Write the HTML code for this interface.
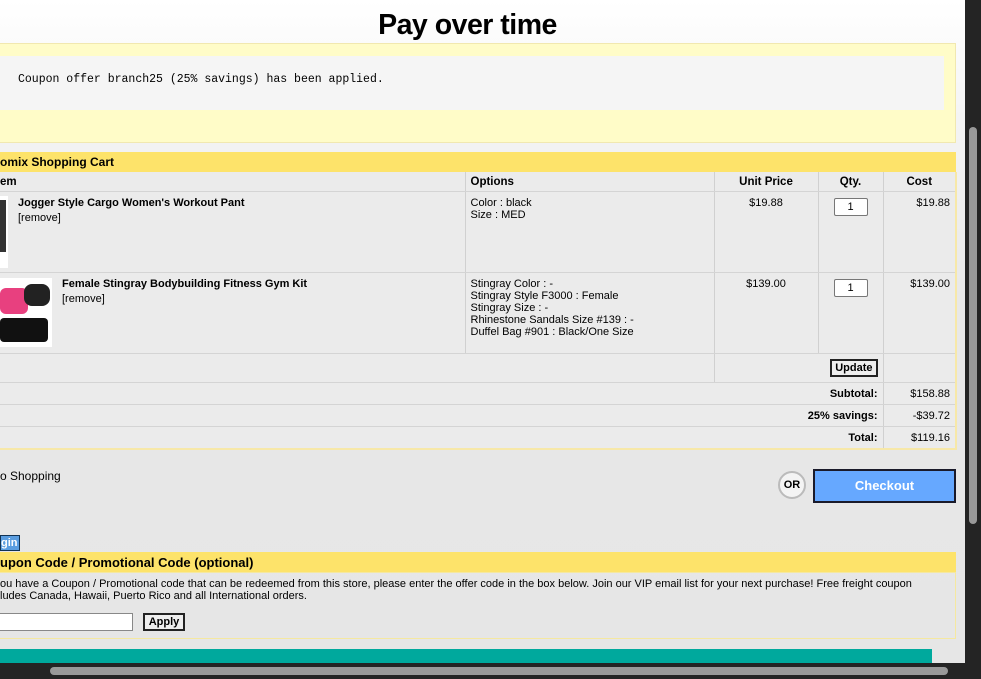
<!DOCTYPE html>
<html><head><style>
*{margin:0;padding:0;box-sizing:border-box}
body{width:981px;height:679px;overflow:hidden;position:relative;background:linear-gradient(#fff 0,#f4f4f4 120px,#e8e8e8 300px,#e6e6e6);font-family:"Liberation Sans",Arial,sans-serif;font-size:11px;color:#000}
.a{position:absolute}
h1{position:absolute;left:0;width:935px;top:9px;text-align:center;font-size:28.5px;font-weight:bold;letter-spacing:-0.5px}
.b{font-weight:bold}
td{border-right:1px solid #d0d0d0;border-bottom:1px solid #d4d4d4;vertical-align:top;padding:5px 5px 4px}
table{border-collapse:collapse;position:absolute;left:0;top:172px;width:956px;table-layout:fixed;background:#ebebeb;border-right:2px solid #f7e8a8;border-bottom:2px solid #f7e8a8}
</style></head><body>
<h1>Pay over time</h1>
<div class="a" style="left:0;top:43px;width:956px;height:100px;background:#fffcc8;border:1px solid #f1e8b0;border-left:none"></div>
<div class="a" style="left:0;top:56px;width:944px;height:54px;background:#f5f5f5"></div>
<div class="a" style="left:18px;top:73px;font-family:'Liberation Mono',monospace;font-size:11.5px">Coupon offer branch25 (25% savings) has been applied.</div>
<div class="a b" style="left:0;top:152px;width:956px;height:20px;background:#fde36a;padding:3px 0 0 0;font-size:12px">omix Shopping Cart</div>
<table>
<colgroup><col style="width:465px"><col style="width:249px"><col style="width:104px"><col style="width:65px"><col style="width:73px"></colgroup>
<tr style="height:19px" class="b"><td style="padding:4px 0 2px;font-size:11.5px">em</td><td style="font-size:11.5px;padding:4px 5px 2px">Options</td><td style="text-align:center;font-size:11.5px;padding:4px 3px 2px">Unit Price</td><td style="text-align:center;font-size:11.5px;padding:4px 3px 2px">Qty.</td><td style="text-align:center;font-size:11.5px;padding:4px 3px 2px">Cost</td></tr>
<tr style="height:81px"><td style="position:relative;padding:5px 0 0 18px"><div class="a" style="left:0;top:4px;width:8px;height:72px;background:#fff"><div style="width:6px;height:52px;background:#333;margin-top:4px"></div></div><div class="b">Jogger Style Cargo Women's Workout Pant</div><div style="margin-top:3px">[remove]</div></td><td style="line-height:12px">Color : black<br>Size : MED</td><td style="text-align:center">$19.88</td><td style="text-align:center;padding-top:6px"><div style="width:34px;height:18px;margin:0 auto;background:#fff;border:1px solid #777;border-radius:2px;font-size:11px;padding:2px 0">1</div></td><td style="text-align:right">$19.88</td></tr>
<tr style="height:81px"><td style="position:relative;padding:5px 0 0 62px"><div class="a" style="left:0;top:5px;width:52px;height:69px;background:#fff"><div class="a" style="left:0;top:10px;width:28px;height:26px;background:#e8407f;border-radius:6px"></div><div class="a" style="left:24px;top:6px;width:26px;height:22px;background:#222;border-radius:8px"></div><div class="a" style="left:0;top:40px;width:48px;height:24px;background:#111;border-radius:4px"></div></div><div class="b">Female Stingray Bodybuilding Fitness Gym Kit</div><div style="margin-top:3px">[remove]</div></td><td style="line-height:12px">Stingray Color : -<br>Stingray Style F3000 : Female<br>Stingray Size : -<br>Rhinestone Sandals Size #139 : -<br>Duffel Bag #901 : Black/One Size</td><td style="text-align:center">$139.00</td><td style="text-align:center;padding-top:6px"><div style="width:34px;height:18px;margin:0 auto;background:#fff;border:1px solid #777;border-radius:2px;font-size:11px;padding:2px 0">1</div></td><td style="text-align:right">$139.00</td></tr>
<tr style="height:29px"><td colspan="2"></td><td colspan="2" style="text-align:right;padding:5px 5px"><span class="b" style="display:inline-block;border:2px solid #222;background:#eee;padding:1px 3px;font-size:11px">Update</span></td><td></td></tr>
<tr style="height:22px"><td colspan="4" class="b" style="text-align:right">Subtotal:</td><td style="text-align:right">$158.88</td></tr>
<tr style="height:22px"><td colspan="4" class="b" style="text-align:right">25% savings:</td><td style="text-align:right">-$39.72</td></tr>
<tr style="height:22px"><td colspan="4" class="b" style="text-align:right">Total:</td><td style="text-align:right">$119.16</td></tr>
</table>
<div class="a" style="left:0;top:469px;font-size:12px">o Shopping</div>
<div class="a b" style="left:778px;top:471px;width:28px;height:28px;border-radius:50%;border:2px solid #bbb;background:#f4f4f4;text-align:center;line-height:24px;font-size:11px">OR</div>
<div class="a b" style="left:813px;top:469px;width:143px;height:34px;background:#66a8ff;border:2px solid #1a1a2a;color:#fff;text-align:center;line-height:30px;font-size:13px">Checkout</div>
<div class="a b" style="left:0;top:535px;width:20px;height:16px;background:#5a9de0;border:1px solid #135;color:#fff;font-size:11px;line-height:14px">gin</div>
<div class="a b" style="left:0;top:552px;width:956px;height:20px;background:#fde36a;font-size:13px;padding-top:3px">upon Code / Promotional Code (optional)</div>
<div class="a" style="left:0;top:572px;width:956px;height:67px;border:1px solid #f5e8a0;border-left:none"></div>
<div class="a" style="left:0;top:578px;font-size:11px;line-height:12px">ou have a Coupon / Promotional code that can be redeemed from this store, please enter the offer code in the box below. Join our VIP email list for your next purchase! Free freight coupon<br>ludes Canada, Hawaii, Puerto Rico and all International orders.</div>
<div class="a" style="left:0;top:613px;width:133px;height:18px;background:#fff;border:1px solid #888;border-left:none"></div>
<div class="a b" style="left:143px;top:613px;width:42px;height:18px;border:2px solid #222;background:#eee;font-size:11px;text-align:center;line-height:14px">Apply</div>
<div class="a" style="left:0;top:649px;width:932px;height:14px;background:#00a99d"></div>
<div class="a" style="left:965px;top:0;width:16px;height:679px;background:#242424"><div class="a" style="left:4px;top:127px;width:8px;height:397px;background:#999;border-radius:4px"></div></div>
<div class="a" style="left:0;top:663px;width:965px;height:16px;background:#242424"><div class="a" style="left:50px;top:4px;width:898px;height:8px;background:#999;border-radius:4px"></div></div>
</body></html>
